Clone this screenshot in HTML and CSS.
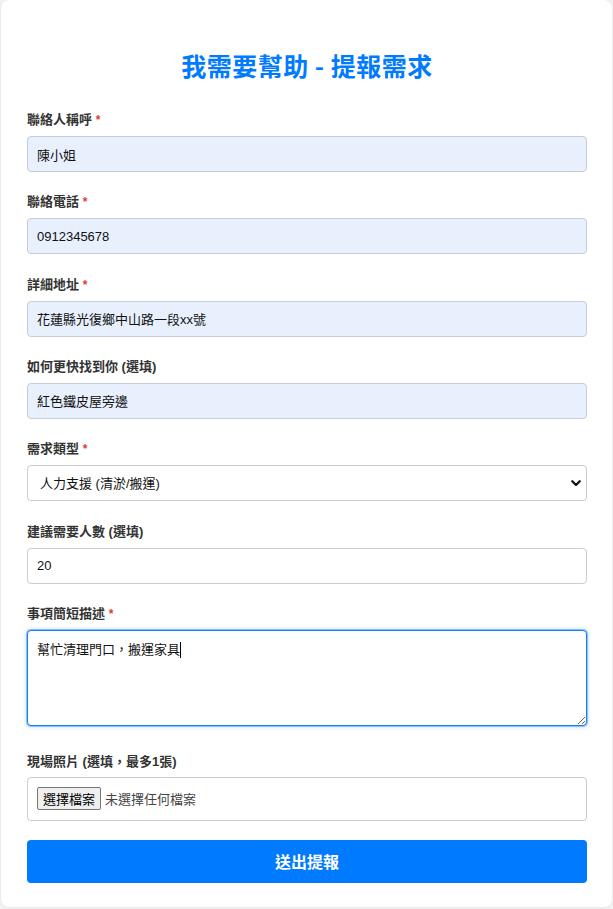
FILE: index.html
```html
<!DOCTYPE html>
<html lang="zh-Hant">
<head>
<meta charset="utf-8">
<title>我需要幫助 - 提報需求</title>
<link rel="stylesheet" href="styles.css">
</head>
<body>
<div class="card">
  <h2 class="title">我需要幫助 - 提報需求</h2>
  <form class="form">
    <div class="group">
      <label class="label">聯絡人稱呼 <span class="req">*</span></label>
      <input class="field filled" type="text" value="陳小姐">
    </div>
    <div class="group">
      <label class="label">聯絡電話 <span class="req">*</span></label>
      <input class="field filled" type="text" value="0912345678">
    </div>
    <div class="group">
      <label class="label">詳細地址 <span class="req">*</span></label>
      <input class="field filled" type="text" value="花蓮縣光復鄉中山路一段xx號">
    </div>
    <div class="group">
      <label class="label">如何更快找到你 (選填)</label>
      <input class="field filled" type="text" value="紅色鐵皮屋旁邊">
    </div>
    <div class="group">
      <label class="label">需求類型 <span class="req">*</span></label>
      <div class="select-wrap">
        <select class="field select">
          <option>人力支援 (清淤/搬運)</option>
        </select>
        <svg class="chev" width="10" height="7" viewBox="0 0 10 7"><path d="M1.3 1.3 L5 5 L8.7 1.3" fill="none" stroke="#111" stroke-width="2.3" stroke-linecap="round" stroke-linejoin="round"/></svg>
      </div>
    </div>
    <div class="group">
      <label class="label">建議需要人數 (選填)</label>
      <input class="field" type="text" value="20">
    </div>
    <div class="group group-ta">
      <label class="label">事項簡短描述 <span class="req">*</span></label>
      <div class="ta-wrap">
        <textarea class="field textarea focused">幫忙清理門口，搬運家具</textarea>
        <span class="caret"></span>
      </div>
    </div>
    <div class="group group-file">
      <label class="label label-file">現場照片 (選填，最多1張)</label>
      <div class="filebox">
        <span class="filebtn">選擇檔案</span>
        <span class="filetext">未選擇任何檔案</span>
      </div>
    </div>
    <button class="submit" type="button">送出提報</button>
  </form>
</div>
</body>
</html>
```

FILE: styles.css
```css
html, body {
  margin: 0;
  padding: 0;
}
body {
  background: #f2f2f2;
  padding: 0 1px 2px 1px;
  font-family: "Liberation Sans", "Noto Sans CJK TC", sans-serif;
  color: #333;
}
.card {
  background: #fff;
  border-radius: 8px;
  box-shadow: 0 0 3px rgba(0, 0, 0, 0.08);
  padding: 50px 25px 24px 26px;
}
.title {
  margin: 0 0 31px 0;
  text-align: center;
  color: #007bff;
  font-size: 25px;
  letter-spacing: 0.5px;
  line-height: 30px;
  font-weight: bold;
  font-family: "Noto Sans CJK TC", sans-serif;
}
.form {
  margin: 0;
}
.group {
  margin-bottom: 21.33px;
}
.group-ta {
  margin-bottom: 27px;
}
.group-file {
  margin-bottom: 19px;
}
.label {
  display: block;
  font-size: 13px;
  line-height: 18px;
  font-weight: bold;
  color: #333;
  margin-bottom: 7px;
}
.label-file {
  margin-bottom: 6px;
}
.req {
  color: #e53935;
  font-size: 12px;
}
.field {
  display: block;
  box-sizing: border-box;
  width: 100%;
  height: 36px;
  margin: 0;
  padding: 0 9px;
  border: 1px solid #ccc;
  border-radius: 4px;
  background: #fff;
  font-family: "Liberation Sans", "Noto Sans CJK TC", sans-serif;
  font-size: 13px;
  color: #111;
  outline: none;
}
.filled {
  background: #e8f0fe;
  border-color: #c6ccd6;
}
.select-wrap {
  position: relative;
}
.select {
  appearance: none;
  -webkit-appearance: none;
  padding: 0 30px 0 12px;
  font-size: 13px;
}
.chev {
  position: absolute;
  right: 6px;
  top: 15px;
  pointer-events: none;
}
.ta-wrap {
  position: relative;
}
.textarea {
  height: 96px;
  padding: 10px 9px;
  line-height: 18px;
  resize: both;
}
.caret {
  position: absolute;
  left: 153px;
  top: 12px;
  width: 1px;
  height: 16px;
  background: #000;
}
.focused {
  border-color: #1a7cf0;
  box-shadow: 0 0 0 1px rgba(26, 124, 240, 0.35), 0 0 4px rgba(0, 123, 255, 0.45);
}
.filebox {
  box-sizing: border-box;
  height: 44px;
  border: 1px solid #ccc;
  border-radius: 4px;
  padding: 0 9px;
  display: flex;
  align-items: center;
  gap: 4px;
}
.filebtn {
  box-sizing: border-box;
  height: 23px;
  padding: 0 5px;
  display: flex;
  align-items: center;
  background: #efefef;
  border: 1px solid #767676;
  border-radius: 2px;
  font-size: 13px;
  color: #000;
}
.filetext {
  font-size: 13px;
  color: #444;
}
.submit {
  display: block;
  width: 100%;
  height: 43px;
  border: none;
  border-radius: 4px;
  background: #007bff;
  color: #fff;
  font-family: "Noto Sans CJK TC", sans-serif;
  font-size: 16px;
  font-weight: bold;
  cursor: pointer;
}
```
